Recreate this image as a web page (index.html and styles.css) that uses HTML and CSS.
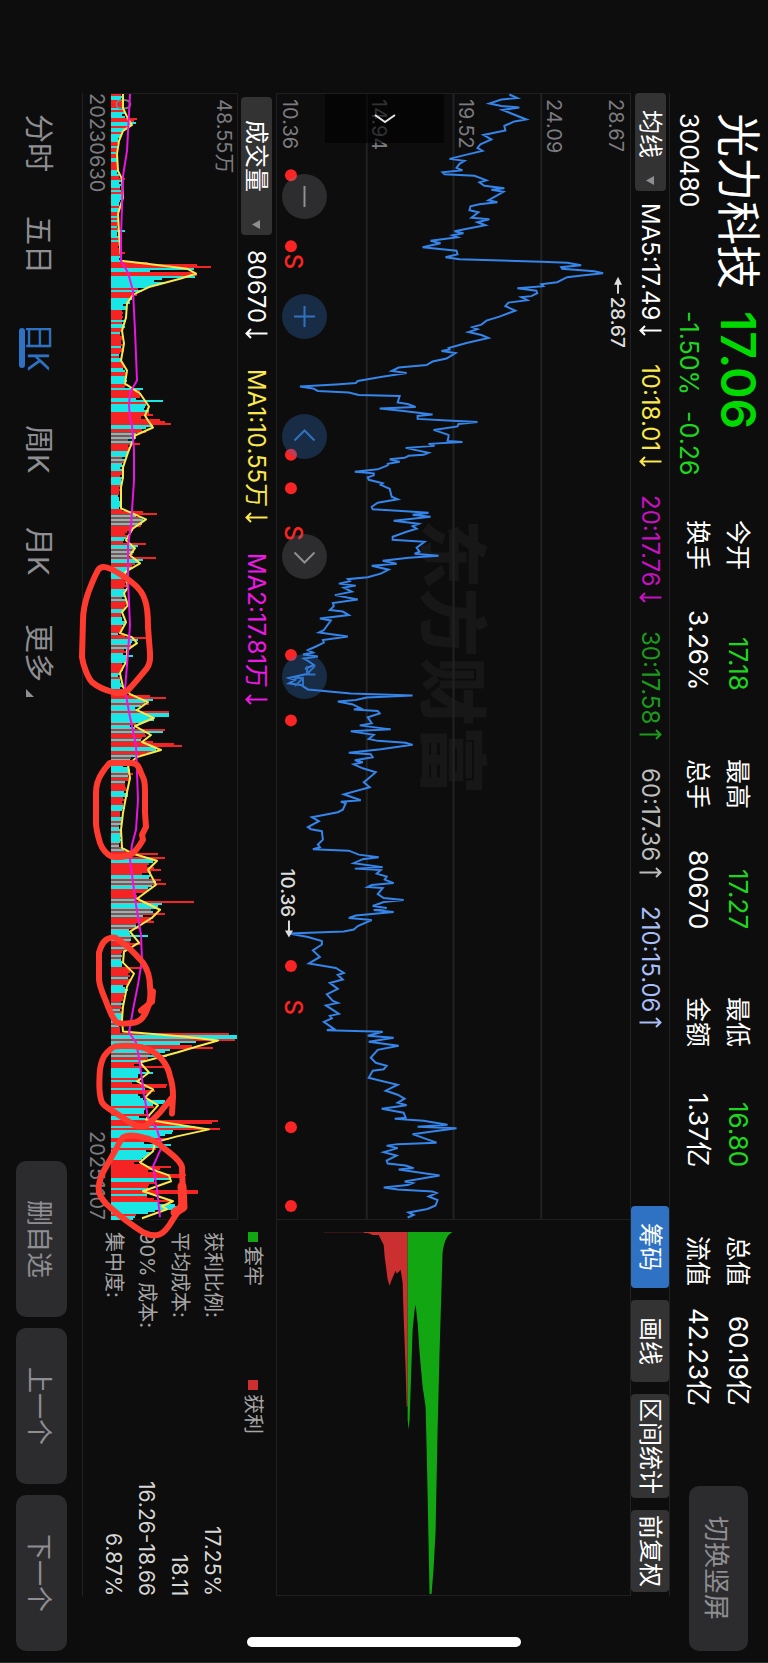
FILE: index.html
```html
<!DOCTYPE html>
<html lang="zh-CN">
<head>
<meta charset="utf-8">
<meta name="viewport" content="width=device-width, initial-scale=1">
<title>光力科技 300480</title>
<link rel="stylesheet" href="styles.css">
</head>
<body>
<div class="screen">
  <header class="header">
    <div class="quote">
      <h1 class="name">光力科技</h1>
      <div class="price">17.06</div>
      <div class="code">300480</div>
      <div class="change"><span>-1.50%</span><span>-0.26</span></div>
    </div>
    <div class="stats">
      <dl class="stat"><div><dt>今开</dt><dd class="down">17.18</dd></div><div><dt>换手</dt><dd>3.26%</dd></div></dl>
      <dl class="stat"><div><dt>最高</dt><dd class="down">17.27</dd></div><div><dt>总手</dt><dd>80670</dd></div></dl>
      <dl class="stat"><div><dt>最低</dt><dd class="down">16.80</dd></div><div><dt>金额</dt><dd>1.37亿</dd></div></dl>
      <dl class="stat"><div><dt>总值</dt><dd>60.19亿</dd></div><div><dt>流值</dt><dd>42.23亿</dd></div></dl>
    </div>
    <button class="soft-button rotate-button" type="button">切换竖屏</button>
  </header>

  <section class="toolbar">
    <button class="picker" type="button" aria-haspopup="listbox">均线<i class="caret"></i></button>
    <ul class="indicators">
      <li>MA5:17.49<svg class="arrow" viewBox="0 0 23 11" role="img" aria-label="↓"><path d="M22.500 5.500H1.500M6 1L1.500 5.500 6 10"/></svg></li>
      <li class="yellow">10:18.01<svg class="arrow" viewBox="0 0 23 11" role="img" aria-label="↓"><path d="M22.500 5.500H1.500M6 1L1.500 5.500 6 10"/></svg></li>
      <li class="purple">20:17.76<svg class="arrow" viewBox="0 0 23 11" role="img" aria-label="↓"><path d="M22.500 5.500H1.500M6 1L1.500 5.500 6 10"/></svg></li>
      <li class="green">30:17.58<svg class="arrow" viewBox="0 0 23 11" role="img" aria-label="↑"><path d="M.5 5.500H21.500M17 1l4.500 4.500L17 10"/></svg></li>
      <li class="gray">60:17.36<svg class="arrow" viewBox="0 0 23 11" role="img" aria-label="↑"><path d="M.5 5.500H21.500M17 1l4.500 4.500L17 10"/></svg></li>
      <li class="pale-blue">210:15.06<svg class="arrow" viewBox="0 0 23 11" role="img" aria-label="↑"><path d="M.5 5.500H21.500M17 1l4.500 4.500L17 10"/></svg></li>
    </ul>
    <div class="tools">
      <button class="tool active" type="button">筹码</button>
      <button class="tool" type="button">画线</button>
      <button class="tool" type="button">区间统计</button>
      <button class="tool" type="button">前复权</button>
    </div>
  </section>

  <section class="upper">
    <div class="price-chart">
      <svg class="plot" viewBox="276 93 354 1127" preserveAspectRatio="none" role="img" aria-label="日K走势">
        <text class="watermark" transform="translate(426 519) rotate(90)">东方财富</text>
        <path class="grid" d="M366 93V1220M453 93V1220M541 93V1220"/>
        <g class="axis-text">
          <text transform="translate(609 98) rotate(90)">28.67</text>
          <text transform="translate(547 98) rotate(90)">24.09</text>
          <text transform="translate(459 98) rotate(90)">19.52</text>
          <text transform="translate(371 98) rotate(90)">14.94</text>
          <text transform="translate(282 98) rotate(90)">10.36</text>
        </g>
        <polyline class="price-line" points="509,93.5 517,97 501,98.5 489,102.5 501,105 519,106.5 502,109 511,112.5 526,118.5 514,120.5 504,125 505,129.5 483,134 491,138.5 480,143.5 477,147 482,150 461,155 449,158 464,160 459,163 456,167 462,169.5 442,171.5 444,173.5 474,175 486,179.5 479,181.5 484,185 504,187.5 491,189 503,191 488,199.5 497,201.5 479,203.5 470,205.5 469,209.5 478,211.5 471,217 489,218.5 477,221.5 485,224.5 464,228.5 454,230.5 463,232.5 452,234.5 457,236.5 430,240 440,242.5 422,246.5 456,250 457,253.5 445,256.5 459,258.5 541,261 567,262 581,264.5 561,266.5 562,268 594,270.5 603,272.5 584,274.5 567,276.5 557,281.5 541,283.5 543,285.5 517,287.5 536,290 537,292.5 531,295.5 521,296.5 527,299.5 508,302 505,305.5 515,310 499,316 486,320 481,324 472,326.5 477,328.5 468,331.5 481,334.5 488,337.5 466,342.5 448,347.5 449,349 441,350.5 455,352.5 446,358 432,361 426,364.5 398,367 391,370.5 406,372.5 380,376.5 357,380.5 355,382.5 335,384 299,386 312,388 317,390.5 348,392 358,394.5 399,395.5 397,402 407,403.5 415,406.5 379,408 403,410.5 432,414 417,415.5 417,418.5 447,420 477,421.5 458,423.5 457,426 433,429.5 448,434.5 448,436.5 447,440.5 462,441.5 428,443.5 434,445.5 405,447.5 428,452.5 423,454.5 408,455.5 404,457.5 389,459 399,461.5 387,463.5 387,465 377,469 354,471.5 373,473 373,475 367,477 368,479.5 382,483 380,484.5 389,488.5 391,496.5 397,499 377,502.5 371,506.5 372,509 397,510.5 428,512.5 412,514.5 430,516.5 407,519 393,520.5 418,523.5 412,526 416,528.5 406,531.5 392,536.5 392,539.5 424,541.5 416,547.5 419,551.5 414,553.5 438,555.5 408,557.5 382,560.5 396,563.5 371,565.5 388,569.5 380,573.5 367,577 347,579 349,581 338,583.5 355,585.5 343,587.5 351,591.5 334,595 357,599.5 332,603 333,606 329,610 342,611.5 348,615 319,618.5 330,620.5 323,630 318,632.5 347,636.5 322,640 323,642.5 315,646.5 307,650 312,652.5 302,654.5 317,656.5 303,658.5 308,661.5 313,665 305,668.5 308,673.5 288,678 294,680 288,683.5 300,685 307,689.5 323,691 350,693.5 412,695.5 366,697.5 355,700 337,701.5 352,704.5 360,708.5 353,709.5 377,711 379,713.5 367,717.5 371,723.5 359,725.5 390,729.5 350,731.5 373,735 368,739 377,741 405,743 412,745 380,749.5 348,753 370,754.5 372,757.5 354,760.5 362,762.5 353,764.5 362,768.5 375,772.5 368,778.5 363,782.5 369,787.5 343,794.5 360,800.5 340,802 345,803.5 342,810 337,812.5 311,817.5 318,821.5 307,827.5 310,829.5 321,831.5 322,840 317,845 319,847.5 312,849.5 348,851 358,855 378,857.5 362,859.5 353,863.5 382,867.5 354,869 380,870.5 376,874 386,877 384,880 393,883.5 371,885.5 367,887.5 382,888.5 377,894.5 383,898.5 403,900.5 383,902.5 372,906.5 386,908.5 373,910.5 393,912.5 355,916 348,918.5 371,920.5 357,926.5 353,930 343,932 288,934 307,937.5 321,941.5 321,945 312,951 319,957.5 308,964 335,968.5 343,973.5 337,975.5 342,980 329,983.5 337,989.5 326,995 332,1001.5 337,1003.5 325,1006 338,1014.5 329,1016.5 331,1019 323,1022.5 333,1029.5 326,1031 382,1032.5 367,1036.5 393,1038.5 368,1042.5 398,1046.5 377,1050.5 370,1058.5 375,1063.5 386,1066.5 383,1070 372,1071.5 368,1078.5 380,1081.5 397,1085.5 385,1091.5 397,1095.5 404,1099.5 397,1103.5 406,1106 381,1109.5 403,1113.5 405,1118.5 394,1119.5 423,1121.5 447,1125.5 417,1127.5 456,1129 430,1132.5 412,1135 436,1143.5 397,1145 386,1146.5 397,1149 383,1153 396,1156.5 386,1161.5 387,1164.5 405,1166.5 413,1169 398,1170.5 439,1176.5 404,1182.5 412,1184 407,1186 383,1188.5 397,1190.5 432,1192.5 436,1194 428,1197.5 437,1201 435,1206.5 427,1210 408,1213.5 413,1216 407,1218.5"/>
        <g class="event">
          <circle cx="290" cy="174.500" r="6"/><circle cx="290" cy="245.500" r="6"/><circle cx="290" cy="454.500" r="6"/>
          <circle cx="290" cy="488" r="6"/><circle cx="290" cy="655" r="6"/><circle cx="290" cy="720.500" r="6"/>
          <circle cx="290" cy="966.500" r="6"/><circle cx="290" cy="1128" r="6"/><circle cx="290" cy="1207" r="6"/>
          <text transform="translate(284 253) rotate(90)">S</text>
          <text transform="translate(284 525) rotate(90)">S</text>
          <text transform="translate(284 1000) rotate(90)">S</text>
        </g>
        <g class="extreme">
          <path d="M618 293V280"/><path class="head" d="M618 276l-4 8h8z"/>
          <text transform="translate(611 296) rotate(90)">28.67</text>
          <text transform="translate(280 869) rotate(90)">10.36</text>
          <path d="M288 921V933"/><path class="head" d="M288 938l-4 -7h8z"/>
        </g>
      </svg>
      <button class="handle" type="button" aria-label="展开">
        <svg viewBox="0 0 22 9"><path d="M1 1l10 7L21 1"/></svg>
      </button>
      <div class="float-buttons">
        <button class="float gray-float" type="button" aria-label="缩小"><svg viewBox="0 0 45 45"><path d="M22.500 12v21"/></svg></button>
        <button class="float" type="button" aria-label="放大"><svg viewBox="0 0 45 45"><path d="M22.500 12v21M12 22.500h21"/></svg></button>
        <button class="float" type="button" aria-label="向左"><svg viewBox="0 0 45 45"><path d="M12.500 26.500l10-10 10 10"/></svg></button>
        <button class="float gray-float" type="button" aria-label="向右"><svg viewBox="0 0 45 45"><path d="M12.500 18.500l10 10 10-10"/></svg></button>
        <button class="float" type="button" aria-label="还原"><svg viewBox="0 0 45 45"><path d="M33 12l-8 8M25 12v8.500h8.500M13 32l8-8M12 24h9v8"/></svg></button>
      </div>
    </div>
    <div class="chip-chart">
      <svg class="plot" viewBox="276 1220 354 376" preserveAspectRatio="none" role="img" aria-label="筹码分布">
        <path class="chip-faint" d="M323 1232h44v1h-44z"/>
        <path class="chip-gain" d="M363 1232H407V1407H406L405 1370 403 1317 402 1283 400 1270 396 1274 395 1271 391 1280 389 1286 387 1280 384 1257 383 1245 378 1235 372 1235 367 1233H363z"/>
        <path class="chip-loss" d="M407 1232V1420L408 1430 409 1420 411 1360 412 1330 414 1310 415 1305 417 1323 419 1353 422 1387 425 1407 426 1447 427 1493 429 1595H431L433 1570 435 1533 437 1433 439 1353 441 1287 442 1253Q444 1236 452 1232z"/>
      </svg>
    </div>
  </section>

  <section class="lower">
    <div class="volume">
      <div class="volume-head">
        <button class="picker wide" type="button" aria-haspopup="listbox">成交量<i class="caret"></i></button>
        <ul class="indicators">
          <li>80670<svg class="arrow" viewBox="0 0 23 11" role="img" aria-label="↓"><path d="M22.500 5.500H1.500M6 1L1.500 5.500 6 10"/></svg></li>
          <li class="yellow">MA1:10.55万<svg class="arrow" viewBox="0 0 23 11" role="img" aria-label="↓"><path d="M22.500 5.500H1.500M6 1L1.500 5.500 6 10"/></svg></li>
          <li class="magenta">MA2:17.81万<svg class="arrow" viewBox="0 0 23 11" role="img" aria-label="↓"><path d="M22.500 5.500H1.500M6 1L1.500 5.500 6 10"/></svg></li>
        </ul>
      </div>
      <div class="volume-chart">
        <svg class="plot" viewBox="111 93 126 1127" preserveAspectRatio="none" role="img" aria-label="成交量">
          <g class="axis-text"><text transform="translate(217 98) rotate(90)">48.55万</text></g>
          <path class="bars-up" id="bars-up"/>
          <path class="bars-down" id="bars-down"/>
          <g class="axis-text"><text transform="translate(116 97) rotate(90)">0</text></g>
          <polyline class="ma-short" id="ma-short"/>
          <polyline class="ma-long" points="130,93 127,150 123,175 121,235 121,260 128,272 133,290 135,330 137,380 130,392 129,405 130,418 132,425 134,450 134,480 132,510 131,525 128,545 128,580 130,625 127,665 125,690 130,717 136,745 138,800 136,830 132,845 130,860 136,905 141,935 142,960 138,985 133,1010 129,1033 136,1043 139,1058 144,1095 148,1118 157,1130 162,1147 153,1167 157,1190 160,1218"/>
          <g class="marker">
            <path d="M117 572C107 566 101 565 98 570C94 577 91 585 88 593C85 602 83 612 83 620L82 657C83 665 88 678 92 682C98 687 105 690 113 692C119 694 124 693 128 690C134 684 142 674 147 668C151 662 150 658 150 653L148 627C148 616 148 608 145 600C143 593 138 587 133 583C127 578 122 575 117 572z"/>
            <path d="M110 763H130C136 763 138 765 139 768L144 780C145 784 145 788 145 793V813L146 827 142 835 143 840C139 847 135 853 130 855C124 857 118 858 112 857C107 855 102 849 100 843C98 836 96 830 96 823V793C96 785 98 779 102 773C105 768 108 765 110 763z"/>
            <path d="M108 939C111 938 113 937 115 938C124 943 136 955 143 963C147 969 150 978 150 987C151 996 150 1004 147 1010C144 1018 140 1022 135 1023C129 1024 122 1025 117 1023C112 1019 111 1013 108 1007C105 998 100 990 99 980V953C101 946 103 941 108 939z"/>
            <path d="M153 992L152 1002 141 1011"/>
            <path d="M115 1047C124 1046 134 1046 143 1048C150 1050 157 1054 162 1060C166 1065 169 1071 170 1077C173 1085 173 1091 173 1097L160 1113 147 1126C143 1128 138 1127 133 1125L115 1113C110 1110 104 1107 102 1103C99 1096 99 1082 100 1070C101 1062 103 1057 107 1053C110 1050 112 1048 115 1047zM173 1097L172 1114"/>
            <path d="M123 1138C120 1141 119 1144 117 1148L103 1173C100 1179 98 1187 99 1193C101 1199 105 1204 110 1208C120 1217 132 1226 143 1233C149 1236 155 1237 160 1235C165 1233 169 1227 173 1220C179 1212 183 1205 183 1197L182 1168C181 1161 169 1153 163 1148C157 1143 150 1139 143 1138C136 1136 128 1135 123 1138z"/>
            <path class="thick" d="M182 1187L183 1208 175 1213"/>
          </g>
        </svg>
      </div>
      <div class="dates"><span>20230630</span><span>20251107</span></div>
    </div>
    <div class="chip-info">
      <div class="legend"><span><i class="swatch loss"></i>套牢</span><span><i class="swatch gain"></i>获利</span></div>
      <dl class="costs">
        <div><dt>获利比例:</dt><dd>17.25%</dd></div>
        <div><dt>平均成本:</dt><dd>18.11</dd></div>
        <div><dt>90% 成本:</dt><dd>16.26-18.66</dd></div>
        <div><dt>集中度:</dt><dd>6.87%</dd></div>
      </dl>
    </div>
  </section>

  <footer class="footer">
    <nav class="tabs">
      <button class="tab" type="button">分时</button>
      <button class="tab" type="button">五日</button>
      <button class="tab current" type="button">日K</button>
      <button class="tab" type="button">周K</button>
      <button class="tab" type="button">月K</button>
      <button class="tab more" type="button">更多</button>
    </nav>
    <div class="actions">
      <button class="soft-button" type="button">删自选</button>
      <button class="soft-button" type="button">上一个</button>
      <button class="soft-button" type="button">下一个</button>
    </div>
  </footer>
  <div class="home-indicator"></div>
</div>
<script src="volume.js"></script>
</body>
</html>
```

FILE: styles.css
```css
* { box-sizing: border-box; }

body {
  margin: 0;
  background: #0d0d0d;
  color: #fff;
  font-family: Inter, "Noto Sans CJK SC", sans-serif;
}

/* The whole app is laid out in landscape, turned clockwise by the writing mode. */
.screen {
  position: relative;
  writing-mode: vertical-rl;
  text-orientation: sideways;
  display: flex;
  flex-direction: column;
  width: 100vw;
  height: 100vh;
  min-height: 1560px;
  border-bottom: 1px solid #2c2c2e;
  overflow: hidden;
  white-space: nowrap;
}

h1, dl, dd, ul { margin: 0; padding: 0; }
ul { list-style: none; }

button {
  font: inherit;
  color: inherit;
  border: 0;
  padding: 0;
  background: none;
  writing-mode: inherit;
  text-orientation: inherit;
}

/* Header */
.header {
  display: flex;
  block-size: 98px;
  padding-inline: 113px 11px;
}
.quote {
  display: grid;
  grid-template-columns: 198px 209px;
  grid-template-rows: 60px 38px;
}
.name { font-size: 44px; font-weight: 400; line-height: 60px; }
.price { font-size: 48px; font-weight: 600; line-height: 60px; color: #00da00; }
.code, .change { font-size: 25px; line-height: 38px; }
.change { display: flex; gap: 16px; color: #1fd61f; }
.stats {
  flex: 1;
  display: flex;
  gap: 68px;
  padding-block-start: 10px;
}
.stat { flex: 1; font-size: 25px; line-height: 40px; }
.stat div { display: flex; justify-content: space-between; }
.stat dd { font-size: 26px; }
.down { color: #1fd61f; }
.soft-button {
  background: #2c2c2e;
  color: #8e8e93;
  border-radius: 10px;
  font-size: 26px;
}
.rotate-button {
  inline-size: 165px;
  block-size: 59px;
  margin-block-start: 20px;
  margin-inline-start: 80px;
}

/* Indicator toolbar */
.toolbar {
  display: flex;
  align-items: center;
  block-size: 40px;
  margin-inline: 93px 66px;
  border-block: 1px solid #222;
  font-size: 24px;
}
.picker {
  display: flex;
  align-items: center;
  justify-content: space-between;
  inline-size: 98px;
  block-size: 31px;
  padding-inline: 17px 6px;
  border-radius: 4px;
  background: #333;
  font-size: 24px;
  line-height: 31px;
}
.picker.wide { inline-size: 138px; padding-inline: 23px 6px; }
.caret {
  inline-size: 9px;
  block-size: 8px;
  background: #8e8e93;
  clip-path: polygon(0 50%, 100% 0, 100% 100%);
}
.indicators {
  display: flex;
  gap: 28px;
  padding-inline-start: 12px;
  font-size: 24px;
  line-height: 38px;
}
.indicators li { display: flex; align-items: center; gap: 5px; }
.arrow {
  width: 23px;
  height: 11px;
  fill: none;
  stroke: currentColor;
  stroke-width: 2;
}
.yellow { color: #fbe84c; }
.purple { color: #c910c2; }
.magenta { color: #f018e8; }
.green { color: #1b9a1b; }
.gray { color: #bdbdbd; }
.pale-blue { color: #a9bdf7; }
.tools {
  display: flex;
  gap: 12px;
  margin-inline: auto 4px;
}
.tool {
  min-inline-size: 82px;
  block-size: 38px;
  padding-inline: 4px;
  border-radius: 4px;
  background: #333;
  font-size: 24px;
  line-height: 38px;
}
.tool.active { background: #2f72c4; }

/* Price and chip charts */
.upper {
  flex: 1;
  display: flex;
  min-block-size: 0;
  margin-inline: 93px 66px;
}
.price-chart {
  position: relative;
  flex: 3 1 0;
  min-inline-size: 0;
  border: 1px solid #1f1f1f;
  border-right: 0;
}
.chip-chart {
  flex: 1 1 0;
  min-inline-size: 0;
  border: 1px solid #1f1f1f;
  border-top: 0;
  border-right: 0;
}
.plot {
  display: block;
  width: 100%;
  height: 100%;
  overflow: visible;
  writing-mode: horizontal-tb;
}
.grid { stroke: #222; stroke-width: 2; }
.watermark { font-size: 69px; font-weight: 900; fill: #171717; }
.axis-text { font-size: 20px; fill: #7c7c80; }
.price-line { fill: none; stroke: #3585ea; stroke-width: 2; }
.event { fill: #fb2424; font-size: 24px; font-weight: 500; }
.extreme { fill: #dedede; stroke: none; font-size: 19px; font-weight: 500; }
.extreme path { stroke: #dedede; stroke-width: 2; }
.extreme .head { stroke: none; }
.chip-gain { fill: #cb2f2f; }
.chip-faint { fill: #3a1414; }
.chip-loss { fill: #13a613; }

.handle {
  position: absolute;
  top: 0;
  left: 48px;
  width: 119px;
  height: 49px;
  display: flex;
  align-items: center;
  justify-content: center;
  background: rgba(0, 0, 0, 0.6);
}
.handle svg { width: 22px; height: 9px; fill: none; stroke: #e5e5e5; stroke-width: 2; }
.float-buttons {
  position: absolute;
  top: 80px;
  left: 5px;
  display: flex;
  gap: 75px;
}
.float {
  inline-size: 45px;
  block-size: 45px;
  border-radius: 50%;
  background: rgba(50, 116, 200, 0.3);
}
.gray-float { background: rgba(120, 120, 128, 0.3); }
.float svg { display: block; width: 45px; height: 45px; fill: none; stroke: #2f72c4; stroke-width: 2; }
.gray-float svg { stroke: #8e8e93; }

/* Volume area */
.lower {
  display: flex;
  block-size: 193px;
  margin-inline: 93px 66px;
}
.volume {
  flex: 3 1 0;
  display: flex;
  flex-direction: column;
  min-inline-size: 0;
}
.volume-head {
  display: flex;
  align-items: center;
  block-size: 38px;
  padding-block-start: 2px;
  padding-inline-start: 4px;
}
.volume-head .indicators { gap: 30px; padding-inline-start: 15px; }
.volume-chart {
  position: relative;
  z-index: 1;
  flex: 1;
  min-block-size: 0;
  border: 1px solid #1f1f1f;
  border-left: 0;
}
.bars-up { fill: #f52424; shape-rendering: crispEdges; }
.bars-down { fill: #1ae6e6; shape-rendering: crispEdges; }
.ma-short { fill: none; stroke: #fbe84c; stroke-width: 2; stroke-linejoin: round; }
.ma-long { fill: none; stroke: #e815e0; stroke-width: 2; stroke-linejoin: round; }
.marker { fill: none; stroke: #ff3b2f; stroke-width: 6; stroke-linecap: round; stroke-linejoin: round; }
.marker .thick { stroke-width: 9; }
.dates {
  display: flex;
  justify-content: space-between;
  block-size: 28px;
  font-size: 20px;
  line-height: 28px;
  color: #7c7c80;
}
.chip-info {
  flex: 1 1 0;
  min-inline-size: 0;
  font-size: 20px;
  color: #a6a6a6;
}
.legend {
  display: grid;
  grid-template-columns: 148px 1fr;
  block-size: 47px;
  padding-inline-start: 12px;
  line-height: 45px;
}
.legend span { display: flex; align-items: center; gap: 4px; }
.swatch { inline-size: 10px; block-size: 10px; }
.swatch.loss { background: #13a613; }
.swatch.gain { background: #cb2f2f; }
.costs div {
  display: flex;
  justify-content: space-between;
  padding-inline-start: 12px;
  line-height: 33px;
}
.costs dd { font-size: 21px; color: #d6d6d6; }

/* Footer */
.footer {
  position: relative;
  display: flex;
  justify-content: space-between;
  align-items: center;
  block-size: 83px;
  padding-inline: 92px 11px;
  padding-block-start: 1px;
}
.footer::before {
  content: "";
  position: absolute;
  inset-block-start: 0;
  inset-inline: 93px 66px;
  block-size: 1px;
  background: #222;
}
.tabs { display: flex; block-size: 100%; }
.tab {
  position: relative;
  inline-size: 102px;
  font-size: 29px;
  color: #8e8e93;
}
.tab.current { color: #2f72c4; }
.tab.current::after {
  content: "";
  position: absolute;
  left: 19px;
  top: 32px;
  width: 6px;
  height: 40px;
  border-radius: 3px;
  background: #2f72c4;
}
.tab.more::after {
  content: "";
  position: absolute;
  left: 26px;
  bottom: 7px;
  width: 8px;
  height: 8px;
  background: #8e8e93;
  clip-path: polygon(0 0, 0 100%, 100% 100%);
}
.actions { display: flex; gap: 11px; }
.actions .soft-button { inline-size: 156px; block-size: 51px; }

.home-indicator {
  position: absolute;
  bottom: 15px;
  left: 50%;
  width: 274px;
  height: 10px;
  margin-left: -137px;
  border-radius: 5px;
  background: #fff;
}
```

FILE: volume.js
```js
// Five-day average of the volume, as [length, time] pairs in chart units.
const average = [
  [123,93],[123,107],[128,118],[132,124],[123,130],[119,140],[117,153],[118,170],[122,178],[123,197],[118,213],[119,233],
  [121,260],[147,263],[187,268],[196,273],[180,278],[150,286],[133,294],[127,303],[126,317],[122,330],[124,343],[121,360],
  [127,370],[125,383],[140,393],[149,406],[145,415],[148,420],[153,427],[135,435],[128,452],[123,467],[123,477],[121,487],
  [121,508],[137,515],[146,519],[133,528],[126,540],[135,548],[130,555],[140,563],[125,572],[128,587],[124,593],[128,605],
  [122,612],[126,622],[120,633],[132,637],[137,643],[127,650],[127,660],[120,673],[123,687],[130,694],[148,702],[137,710],
  [154,718],[135,726],[151,735],[142,742],[161,750],[137,757],[128,765],[130,778],[126,797],[123,813],[121,830],[122,848],
  [133,854],[157,861],[148,870],[156,885],[137,899],[160,910],[152,918],[130,932],[139,943],[124,952],[123,963],[134,974],
  [127,987],[123,1007],[122,1020],[123,1032],[183,1037],[218,1041],[197,1047],[177,1053],[140,1063],[149,1073],[137,1082],
  [153,1090],[145,1098],[158,1106],[150,1115],[146,1120],[177,1125],[209,1130],[177,1137],[155,1143],[153,1152],[140,1163],
  [152,1170],[169,1176],[171,1182],[143,1192],[173,1202],[162,1207],[167,1210],[142,1219]
];

// Days that stand out: [time, length, rising].
const peaks = [
  [117,137,1],[119,134,1],[121,136,0],[123,131,0],[177,125,1],[229,125,0],[251,125,1],[261,148,1],[263,197,1],[265,211,1],
  [267,194,0],[269,150,0],[271,196,1],[273,197,1],[275,195,0],[277,162,0],[279,154,0],[281,165,0],[283,158,0],[285,150,0],
  [287,138,1],[289,142,0],[291,133,1],[293,137,1],[387,143,0],[389,140,1],[391,138,1],[393,140,1],[395,140,1],[399,163,0],
  [411,149,1],[413,153,1],[419,160,1],[421,165,1],[423,171,1],[425,153,0],[427,146,0],[443,140,1],[511,143,1],[513,157,1],
  [519,143,0],[525,141,1],[543,146,1],[545,138,0],[557,156,1],[559,143,0],[637,150,1],[639,138,0],[655,133,0],[695,150,1],
  [697,166,1],[699,153,0],[701,145,0],[711,169,1],[713,169,0],[715,169,0],[729,165,1],[731,163,0],[741,153,1],[743,174,1],
  [745,182,1],[747,156,0],[749,156,0],[773,133,1],[853,158,1],[857,165,1],[859,153,0],[869,161,1],[879,161,1],[883,166,1],
  [885,152,0],[901,194,1],[903,162,0],[905,158,0],[913,165,1],[921,154,1],[935,148,0],[967,142,1],[1033,229,1],[1035,237,0],
  [1037,237,0],[1039,235,1],[1041,196,0],[1043,180,0],[1045,192,1],[1047,213,1],[1049,170,0],[1051,165,0],[1053,150,1],
  [1067,165,1],[1073,153,0],[1085,167,1],[1087,166,1],[1101,165,0],[1103,165,0],[1121,218,1],[1123,212,1],[1125,178,1],
  [1127,195,0],[1129,220,1],[1131,173,0],[1133,172,0],[1135,165,0],[1137,160,0],[1145,171,0],[1147,165,0],[1167,171,1],
  [1169,160,1],[1175,186,1],[1177,180,1],[1191,198,1],[1193,198,1],[1201,172,1],[1205,175,0],[1207,187,0],[1209,176,0],
  [1211,155,0],[1213,148,0],[1215,136,1],[1217,135,0],[1219,133,0]
];

const base = 111;
let seed = 7;
function random() {
  seed = (seed * 16807) % 2147483647;
  return seed / 2147483647;
}

function averageAt(time) {
  const next = average.findIndex(point => point[1] >= time);
  if (next <= 0) return average[0][0];
  const [x0, y0] = average[next - 1];
  const [x1, y1] = average[next];
  return x0 + (x1 - x0) * (time - y0) / (y1 - y0);
}

const known = new Map(peaks.map(([time, length, rising]) => [time, [length, rising]]));
let up = "";
let down = "";
let rising = 0;
let run = 0;
for (let time = 93; time < 1220; time += 2) {
  if (run-- <= 0) {
    rising = rising ? 0 : 1;
    run = Math.floor(random() * random() * 7);
  }
  let end = base + (averageAt(time) - base) * (0.72 + 0.36 * random());
  let isUp = rising;
  if (known.has(time)) [end, isUp] = known.get(time);
  const bar = `M${base} ${time}H${end.toFixed(1)}v2H${base}z`;
  if (isUp) up += bar; else down += bar;
}

document.getElementById("bars-up").setAttribute("d", up);
document.getElementById("bars-down").setAttribute("d", down);
document.getElementById("ma-short").setAttribute("points", average.map(point => point.join(",")).join(" "));
```
